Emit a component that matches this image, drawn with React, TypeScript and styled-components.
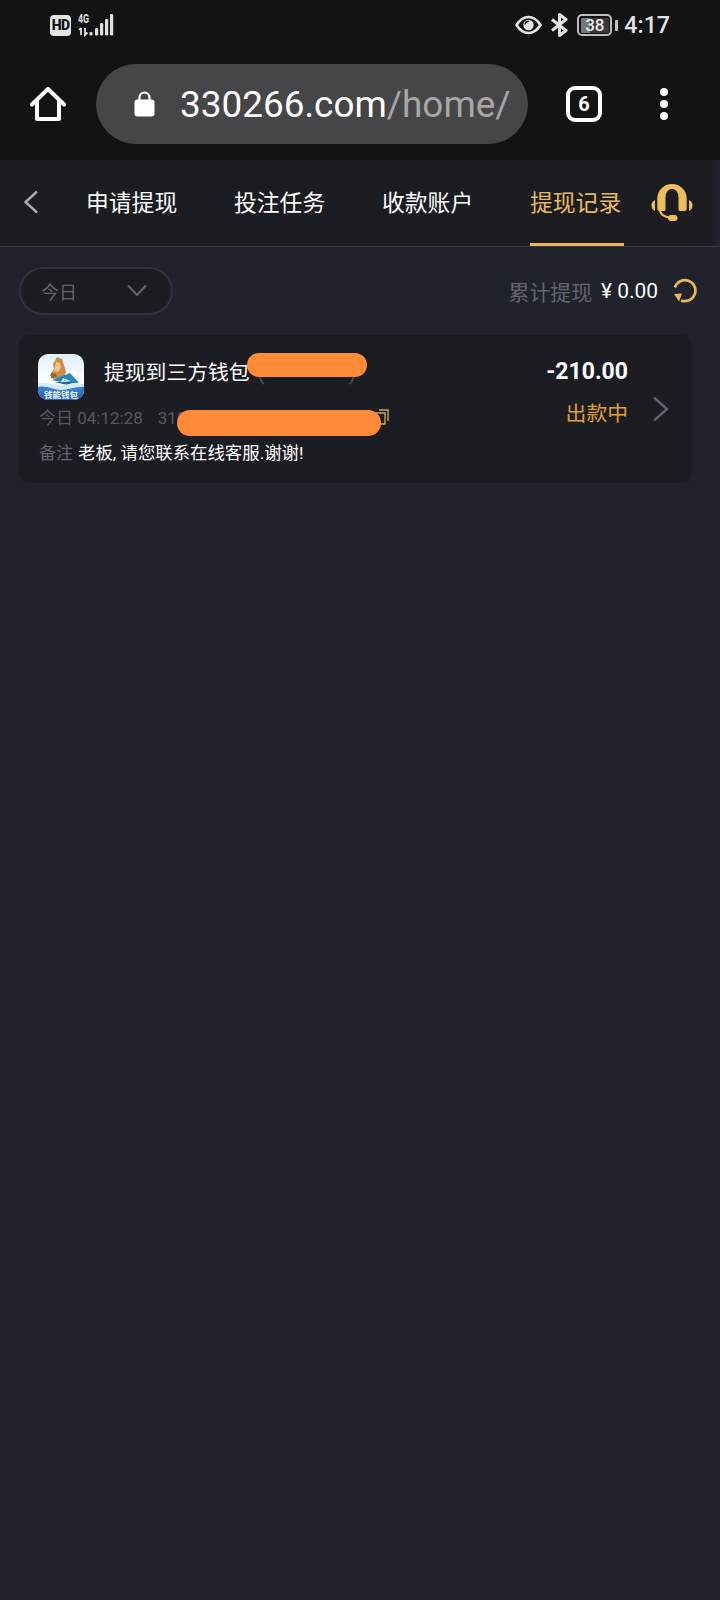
import React from "react";
import styled, { createGlobalStyle } from "styled-components";

const Global = createGlobalStyle`
  html, body { margin: 0; padding: 0; background: #20232b; }
  body { font-family: Roboto, "Noto Sans CJK SC", sans-serif; }
  * { box-sizing: border-box; }
`;

const Page = styled.div`
  width: 720px;
  height: 1600px;
  background: #20232b;
  display: flex;
  flex-direction: column;
  overflow: hidden;
`;

const Chrome = styled.div`
  height: 160px;
  background: #131315;
  display: flex;
  flex-direction: column;
`;

const StatusBar = styled.div`
  height: 50px;
  padding: 0 50px;
  display: flex;
  align-items: center;
  justify-content: space-between;
  color: #e6e6e6;
`;

const StatusGroup = styled.div<{ $gap: number }>`
  display: flex;
  align-items: center;
  gap: ${(p) => p.$gap}px;
`;

const HdBadge = styled.span`
  width: 21px;
  height: 21px;
  border-radius: 4px;
  background: #e4e4e4;
  color: #131315;
  font-size: 14px;
  font-weight: 900;
  display: flex;
  align-items: center;
  justify-content: center;
  letter-spacing: -0.6px;
`;

const Clock = styled.span`
  font-size: 23.2px;
  font-weight: 500;
  color: #e4e4e4;
  line-height: 24px;
  margin-left: -2px;
`;

const BatteryBody = styled.span`
  width: 35px;
  height: 22px;
  border: 2px solid #bdbdbd;
  border-radius: 5px;
  padding: 1.5px;
  font-size: 17px;
  font-weight: 500;
  line-height: 15px;
  text-align: center;
  color: #ececec;
  background: linear-gradient(90deg, #77777a 0 32%, #38383a 32%) content-box;
`;

const BatteryWrap = styled.span`
  display: flex;
  align-items: center;
  gap: 3px;
`;

const BatteryTip = styled.span`
  width: 3px;
  height: 11px;
  border-radius: 1px;
  background: #c4c4c4;
`;

const ToolBar = styled.div`
  flex: 1;
  display: flex;
  align-items: center;
  padding: 0 0 2px 30px;
`;

const UrlPill = styled.div`
  width: 432px;
  height: 80px;
  margin-left: 30px;
  border-radius: 40px;
  background: #464648;
  display: flex;
  align-items: center;
  padding-left: 38px;
  font-size: 36.9px;
  white-space: nowrap;
  overflow: hidden;
`;

const UrlHost = styled.span`
  color: #fff;
  margin-left: 25px;
`;

const UrlPath = styled.span`
  color: #a6a6a6;
`;

const TabCount = styled.div`
  width: 36px;
  height: 36px;
  margin-left: 38px;
  border: 4px solid #fff;
  border-radius: 9px;
  color: #fff;
  font-size: 20px;
  font-weight: 700;
  display: flex;
  align-items: center;
  justify-content: center;
`;

const MenuDots = styled.div`
  margin-left: 58px;
  display: flex;
  flex-direction: column;
  gap: 4px;
`;

const Dot = styled.span`
  width: 8px;
  height: 8px;
  border-radius: 50%;
  background: #fff;
`;

const NavBar = styled.div`
  height: 87px;
  background: linear-gradient(90deg, #1c1d23 715px, #20232b 715px);
  border-bottom: 1px solid #3a3c42;
  display: flex;
  align-items: stretch;
  padding-left: 23px;
`;

const BackSlot = styled.div`
  width: 63px;
  display: flex;
  align-items: center;
  padding-bottom: 2px;
`;

const Tabs = styled.div`
  display: flex;
  gap: 57px;
`;

const Tab = styled.div<{ $active?: boolean }>`
  position: relative;
  width: 91px;
  height: 86px;
  font-size: 22.8px;
  line-height: 88px;
  white-space: nowrap;
  color: ${(p) => (p.$active ? "#e8b95e" : "#fff")};
  ${(p) =>
    p.$active
      ? `&::after { content: ""; position: absolute; left: 0; width: 94px; bottom: 0; height: 3px; background: #e8b95e; }`
      : ""}
`;

const HeadsetSlot = styled.div`
  margin-left: 30px;
  display: flex;
  align-items: center;
`;

const FilterRow = styled.div`
  display: flex;
  align-items: center;
  justify-content: space-between;
  padding: 19px 23px 0 19px;
  height: 68px;
`;

const DateSelect = styled.div`
  width: 154px;
  height: 48px;
  border: 2px solid #2f323a;
  border-radius: 24px;
  background: #1c1d23;
  display: flex;
  align-items: center;
  justify-content: space-between;
  padding: 0 24px 0 20px;
  color: #62656d;
  font-size: 18px;
`;

const Totals = styled.div`
  display: flex;
  align-items: center;
  font-size: 20.9px;
  color: #62656d;
`;

const TotalValue = styled.span`
  color: #fff;
  margin-left: 9px;
  margin-right: 15px;
`;

const Card = styled.div`
  margin: 20px 28px 0 19px;
  height: 148px;
  border-radius: 10px;
  background: #1c1d22;
  padding: 19px 23px 0 19px;
  display: flex;
  justify-content: space-between;
`;

const CardMain = styled.div`
  display: flex;
  flex-direction: column;
`;

const TitleRow = styled.div`
  display: flex;
  align-items: center;
  height: 46px;
`;

const AppIcon = styled.svg`
  width: 46px;
  height: 46px;
  border-radius: 10px;
  flex: none;
`;

const Title = styled.div`
  position: relative;
  margin-left: 20px;
  margin-top: -12px;
  font-size: 20.8px;
  color: #fff;
  white-space: nowrap;
`;

const Paren = styled.span`
  color: #4c4f56;
  margin-left: 8px;
  letter-spacing: 84px;
`;

const Blob = styled.span<{ $l: number; $t: number; $w: number; $h: number }>`
  position: absolute;
  left: ${(p) => p.$l}px;
  top: ${(p) => p.$t}px;
  width: ${(p) => p.$w}px;
  height: ${(p) => p.$h}px;
  border-radius: ${(p) => p.$h / 2}px;
  background: #ff8a38;
`;

const MetaRow = styled.div`
  position: relative;
  margin-top: 6px;
  margin-left: 1px;
  font-size: 17px;
  line-height: 24px;
  color: #555860;
  display: flex;
  align-items: center;
  white-space: nowrap;
`;

const TxId = styled.span`
  margin-left: 15px;
`;

const CopyIcon = styled.svg`
  position: absolute;
  left: 336px;
  top: 3px;
`;

const NoteRow = styled.div`
  margin-top: 11px;
  margin-left: 1px;
  font-size: 17px;
  line-height: 24px;
  color: #62656d;
  white-space: nowrap;
`;

const NoteText = styled.span`
  color: #fff;
  margin-left: 5px;
  font-size: 17.4px;
`;

const CardSide = styled.div`
  display: flex;
  align-items: flex-start;
  gap: 24px;
`;

const AmountCol = styled.div`
  display: flex;
  flex-direction: column;
  align-items: flex-end;
`;

const Amount = styled.div`
  font-size: 23px;
  font-weight: 700;
  color: #fff;
  line-height: 28px;
  margin-top: 4px;
`;

const Status = styled.div`
  margin-top: 13px;
  font-size: 20.8px;
  line-height: 30px;
  color: #e0a030;
`;

const Arrow = styled.svg`
  margin-top: 42px;
`;

function SignalIcon() {
  return (
    <svg width="36" height="24" viewBox="0 0 36 24">
      <text x="0" y="10" fontSize="12" fontWeight="700" fill="#e0e0e0" fontFamily="Roboto, sans-serif" textLength="11" lengthAdjust="spacingAndGlyphs">4G</text>
      <path d="M3 15v7M1.200 17 3 15M7 15v7l2.500-2.500" stroke="#e0e0e0" strokeWidth="1.800" fill="none" />
      <rect x="11.500" y="19" width="3" height="3.500" rx="1" fill="#e0e0e0" />
      <rect x="17" y="15" width="3.200" height="7.500" rx="1.200" fill="#e0e0e0" />
      <rect x="22" y="10" width="3.200" height="12.500" rx="1.200" fill="#e0e0e0" />
      <rect x="27" y="6" width="3.200" height="16.500" rx="1.200" fill="#e0e0e0" />
      <rect x="32" y="1" width="3.200" height="21.500" rx="1.200" fill="#e0e0e0" />
    </svg>
  );
}

function EyeIcon() {
  return (
    <svg width="27" height="20" viewBox="0 0 27 20">
      <path d="M1.500 10C5 4.500 9 2 13.500 2S22 4.500 25.500 10C22 15.500 18 18 13.500 18S5 15.500 1.500 10Z" fill="none" stroke="#e4e4e4" strokeWidth="2.600" />
      <circle cx="13.500" cy="10" r="5.200" fill="#e4e4e4" />
      <path d="M10 9.500a3.800 3.800 0 0 1 3.800-3.300" fill="none" stroke="#131315" strokeWidth="1.500" />
    </svg>
  );
}

function BluetoothIcon() {
  return (
    <svg width="19" height="24" viewBox="0 0 19 24">
      <path d="M2 6.500 16 17.500 9.500 22.500V1.500L16 6.500 2 17.500" fill="none" stroke="#e4e4e4" strokeWidth="3" strokeLinejoin="round" />
    </svg>
  );
}

function HomeIcon() {
  return (
    <svg width="36" height="36" viewBox="0 0 36 36">
      <path d="M2 18.500 18 3l16 15.500M7 15v18h22V15" fill="none" stroke="#fff" strokeWidth="4" strokeLinecap="round" strokeLinejoin="round" />
    </svg>
  );
}

function LockIcon() {
  return (
    <svg width="21" height="26" viewBox="0 0 21 26">
      <path d="M5.500 10V6.500a5 5 0 0 1 10 0V10" fill="none" stroke="#fff" strokeWidth="2.200" />
      <rect x="0.500" y="8.500" width="20" height="17" rx="3" fill="#fff" />
    </svg>
  );
}

function HeadsetIcon() {
  return (
    <svg width="42" height="38" viewBox="0 0 42 38">
      <path d="M6.300 25V14.700a14.700 14.700 0 0 1 29.400 0V25a2 2 0 0 1-2 2H29a1.500 1.500 0 0 1-1.500-1.500V13a6.500 8 0 0 0-13 0v12.500A1.500 1.500 0 0 1 13 27H8.300a2 2 0 0 1-2-2Z" fill="#eebd5c" />
      <path d="M4 16v11C1.500 26 .5 24 .5 21.500S1.500 17 4 16ZM38 16v11c2.500-1 3.500-3 3.500-5.500S40.500 17 38 16Z" fill="#eebd5c" />
      <path d="M9 27c1 4 5 6 10 6.500" fill="none" stroke="#eebd5c" strokeWidth="2.200" />
      <rect x="17" y="31" width="9.500" height="6" rx="3" fill="#eebd5c" />
    </svg>
  );
}

function RefreshIcon() {
  return (
    <svg width="24" height="25" viewBox="0 0 24 25">
      <path d="M1.900 9.500A10.500 10.500 0 1 1 8 22.400" fill="none" stroke="#e8b654" strokeWidth="2.700" />
      <path d="M1 16 9 15.500 6 23.500Z" fill="#e8b654" />
    </svg>
  );
}

function WalletLogo() {
  return (
    <AppIcon viewBox="0 0 46 46">
      <defs>
        <linearGradient id="sky" x1="0" y1="0" x2="0" y2="1">
          <stop offset="0" stopColor="#dff0fb" />
          <stop offset="0.65" stopColor="#ffffff" />
        </linearGradient>
        <linearGradient id="sea" x1="0" y1="0" x2="0" y2="1">
          <stop offset="0" stopColor="#3f93da" />
          <stop offset="1" stopColor="#2357b8" />
        </linearGradient>
      </defs>
      <rect width="46" height="46" fill="url(#sky)" />
      <path d="M19 3l5 2 2 6 2 7-2 5-11 2-3-4 4-6-1-5Z" fill="#c98f48" />
      <path d="M18 8l4 1 1 5-3 4-4-1 1-4Z" fill="#eec48c" />
      <path d="M13 19l5 1 1 3-6 1Z" fill="#8a6a3a" />
      <path d="M32 19 41 29H27L14 26Z" fill="#2a86bd" />
      <path d="M25 24 33 27 22 29Z" fill="#bfe3f3" />
      <path d="M17 28h20l-8 3Z" fill="#1c6a9e" />
      <path d="M0 31c9-3 15 2 23 2s16-3 23-2v15H0Z" fill="url(#sea)" />
      <path d="M0 29c9-2 15 2 23 2s16-3 23-1v3c-7-1-15 3-23 3S9 31 0 33Z" fill="#d6ecf9" />
      <text x="23" y="44" textAnchor="middle" fontSize="8.500" fontWeight="700" fill="#eaf4ff" fontFamily='"Noto Sans CJK SC", sans-serif'>钱能钱包</text>
    </AppIcon>
  );
}

export default function App() {
  return (
    <Page>
      <Global />
      <Chrome>
        <StatusBar>
          <StatusGroup $gap={7}>
            <HdBadge>HD</HdBadge>
            <SignalIcon />
          </StatusGroup>
          <StatusGroup $gap={8}>
            <EyeIcon />
            <BluetoothIcon />
            <BatteryWrap>
              <BatteryBody>38</BatteryBody>
              <BatteryTip />
            </BatteryWrap>
            <Clock>4:17</Clock>
          </StatusGroup>
        </StatusBar>
        <ToolBar>
          <HomeIcon />
          <UrlPill>
            <LockIcon />
            <UrlHost>330266.com</UrlHost>
            <UrlPath>/home/</UrlPath>
          </UrlPill>
          <TabCount>6</TabCount>
          <MenuDots>
            <Dot />
            <Dot />
            <Dot />
          </MenuDots>
        </ToolBar>
      </Chrome>
      <NavBar>
        <BackSlot>
          <svg width="16" height="24" viewBox="0 0 16 24">
            <path d="M14 1.500 2.500 12 14 22.500" fill="none" stroke="#a9acb3" strokeWidth="2.400" />
          </svg>
        </BackSlot>
        <Tabs>
          <Tab>申请提现</Tab>
          <Tab>投注任务</Tab>
          <Tab>收款账户</Tab>
          <Tab $active>提现记录</Tab>
        </Tabs>
        <HeadsetSlot>
          <HeadsetIcon />
        </HeadsetSlot>
      </NavBar>
      <FilterRow>
        <DateSelect>
          今日
          <svg width="20" height="13" viewBox="0 0 20 13">
            <path d="M1 1.500 10 11l9-9.500" fill="none" stroke="#62656d" strokeWidth="2.200" />
          </svg>
        </DateSelect>
        <Totals>
          累计提现
          <TotalValue>¥ 0.00</TotalValue>
          <RefreshIcon />
        </Totals>
      </FilterRow>
      <Card>
        <CardMain>
          <TitleRow>
            <WalletLogo />
            <Title>
              提现到三方钱包
              <Paren>()</Paren>
              <Blob $l={143} $t={-3} $w={120} $h={24} />
            </Title>
          </TitleRow>
          <MetaRow>
            今日 04:12:28
            <TxId>3100</TxId>
            <CopyIcon width="14" height="16" viewBox="0 0 14 16">
              <path d="M4 1h9v11M1 4h9v11H1Z" fill="none" stroke="#c9a65e" strokeWidth="1.400" />
            </CopyIcon>
            <Blob $l={138} $t={4} $w={204} $h={26} />
          </MetaRow>
          <NoteRow>
            备注
            <NoteText>老板, 请您联系在线客服.谢谢!</NoteText>
          </NoteRow>
        </CardMain>
        <CardSide>
          <AmountCol>
            <Amount>-210.00</Amount>
            <Status>出款中</Status>
          </AmountCol>
          <Arrow width="17" height="26" viewBox="0 0 17 26">
            <path d="M2 1.500 15 13 2 24.500" fill="none" stroke="#5e626b" strokeWidth="2.400" />
          </Arrow>
        </CardSide>
      </Card>
    </Page>
  );
}
